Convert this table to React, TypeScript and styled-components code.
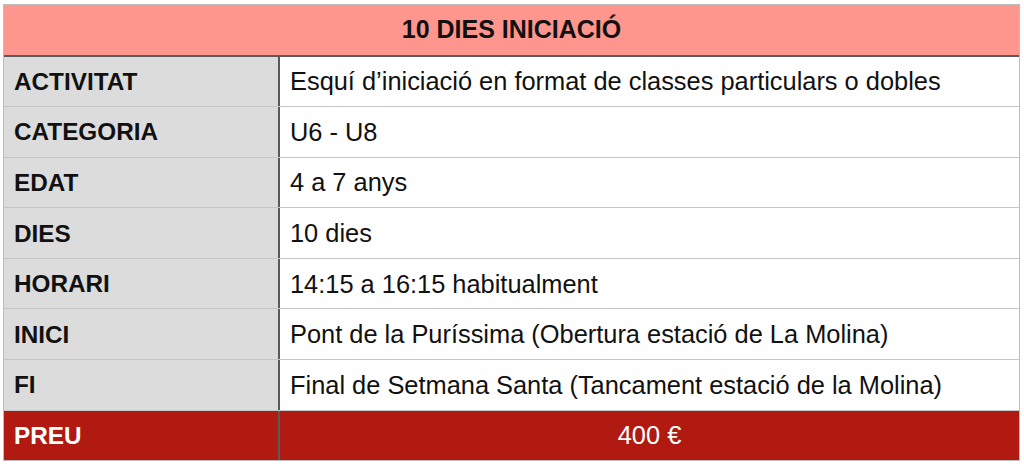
import React from "react";
import styled, { createGlobalStyle } from "styled-components";

const Global = createGlobalStyle`
  html, body { margin: 0; padding: 0; background: #ffffff; }
  body { font-family: "Liberation Sans", Arial, Helvetica, sans-serif; }
`;

const Page = styled.div`
  padding: 4px 0 0 3px;
  width: 1024px;
  height: 468px;
  box-sizing: border-box;
`;

const Table = styled.div`
  width: 1017px;
  height: 457px;
  box-sizing: border-box;
  border: 1px solid #bdbdbd;
  display: flex;
  flex-direction: column;
`;

const TitleRow = styled.div`
  flex: 1;
  background: #ff968e;
  border-bottom: 2px solid #5a5a5a;
  display: flex;
  align-items: center;
  justify-content: center;
  font-weight: 700;
  font-size: 25px;
  color: #111;
`;

const Row = styled.div<{ $price?: boolean }>`
  flex: 1;
  display: grid;
  grid-template-columns: 276px 1fr;
  border-bottom: ${(p) => (p.$price ? "none" : "1px solid #c6c6c6")};
  background: ${(p) => (p.$price ? "#b11a11" : "#ffffff")};
`;

const Label = styled.div<{ $price?: boolean }>`
  display: flex;
  align-items: center;
  padding-left: 10px;
  padding-top: 1px;
  background: ${(p) => (p.$price ? "#b11a11" : "#dcdcdc")};
  color: ${(p) => (p.$price ? "#ffffff" : "#111111")};
  border-right: 2px solid #5a5a5a;
  font-weight: 700;
  font-size: 24.3px;
`;

const Value = styled.div<{ $price?: boolean }>`
  display: flex;
  align-items: center;
  justify-content: ${(p) => (p.$price ? "center" : "flex-start")};
  padding-left: ${(p) => (p.$price ? "0" : "10px")};
  padding-top: 1px;
  color: ${(p) => (p.$price ? "#ffffff" : "#111111")};
  font-size: 25.4px;
`;

const rows: [string, string][] = [
  ["ACTIVITAT", "Esquí d’iniciació en format de classes particulars o dobles"],
  ["CATEGORIA", "U6 - U8"],
  ["EDAT", "4 a 7 anys"],
  ["DIES", "10 dies"],
  ["HORARI", "14:15 a 16:15 habitualment"],
  ["INICI", "Pont de la Puríssima (Obertura estació de La Molina)"],
  ["FI", "Final de Setmana Santa (Tancament estació de la Molina)"],
];

export default function App() {
  return (
    <Page>
      <Global />
      <Table>
        <TitleRow>10 DIES INICIACIÓ</TitleRow>
        {rows.map(([l, v]) => (
          <Row key={l}>
            <Label>{l}</Label>
            <Value>{v}</Value>
          </Row>
        ))}
        <Row $price>
          <Label $price>PREU</Label>
          <Value $price>400 €</Value>
        </Row>
      </Table>
    </Page>
  );
}
